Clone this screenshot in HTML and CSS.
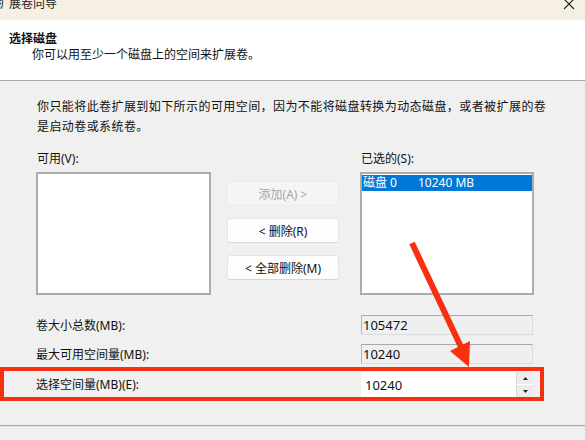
FILE: index.html
```html
<!DOCTYPE html>
<html lang="zh-CN">
<head>
  <meta charset="UTF-8" />
  <meta name="viewport" content="width=device-width, initial-scale=1" />
  <title>扩展卷向导</title>
  <link rel="stylesheet" href="styles.css">
</head>
<body>
  <div class="titlebar">
    <span class="title">扩展卷向导</span>
    <svg class="close" width="12" height="12" viewBox="0 0 12 12">
      <path d="M1 1 L11 11 M11 1 L1 11" stroke="#222" stroke-width="1.1" fill="none" />
    </svg>
  </div>

  <div class="header">
    <h1>选择磁盘</h1>
    <p>你可以用至少一个磁盘上的空间来扩展卷。</p>
  </div>

  <div class="content">
    <p class="note">你只能将此卷扩展到如下所示的可用空间，因为不能将磁盘转换为动态磁盘，或者被扩展的卷是启动卷或系统卷。</p>

    <div class="lists">
      <div class="list-col left">
        <label>可用(V):</label>
        <div class="listbox"></div>
      </div>
      <div class="actions">
        <button class="btn" disabled>添加(A) &gt;</button>
        <button class="btn">&lt; 删除(R)</button>
        <button class="btn">&lt; 全部删除(M)</button>
      </div>
      <div class="list-col right">
        <label>已选的(S):</label>
        <div class="listbox">
          <div class="item selected"><span class="disk">磁盘 0</span><span>10240 MB</span></div>
        </div>
      </div>
    </div>

    <div class="fields">
      <div class="field-row">
        <label>卷大小总数(MB):</label>
        <div class="readonly">105472</div>
      </div>
      <div class="field-row">
        <label>最大可用空间量(MB):</label>
        <div class="readonly">10240</div>
      </div>
      <div class="field-row marked">
        <label>选择空间量(MB)(E):</label>
        <div class="spin">
          <input type="text" value="10240" />
          <div class="spin-buttons">
            <span class="spin-btn"><svg width="5" height="3" viewBox="0 0 5 3"><polygon points="2.5,0 5,3 0,3" fill="#222" /></svg></span>
            <span class="spin-btn"><svg width="5" height="3" viewBox="0 0 5 3"><polygon points="0,0 5,0 2.5,3" fill="#222" /></svg></span>
          </div>
        </div>
      </div>
    </div>

    <div class="divider"></div>
  </div>

  <!-- callout arrow pointing at the size field -->
  <svg class="callout" width="585" height="440" viewBox="0 0 585 440">
    <line x1="412" y1="243" x2="461" y2="347" stroke="#f7300f" stroke-width="6" />
    <polygon points="469,367 450,351 470,341" fill="#f7300f" />
  </svg>
</body>
</html>
```

FILE: styles.css
```css
body {
  margin: 0;
  width: 585px;
  height: 440px;
  overflow: hidden;
  position: relative;
  background: #f0f0f0;
  color: #111;
  font-family: "Noto Sans", "Noto Sans CJK SC", sans-serif;
  font-size: 12px;
}
.titlebar {
  height: 20px;
  background: #f6f0e4;
  display: flex;
  justify-content: space-between;
  align-items: flex-start;
  overflow: hidden;
}
.title {
  margin: -2px 0 0 -3px;
  line-height: 12px;
  font-size: 12px;
  color: #222;
}
.close {
  margin: -2px 10px 0 0;
}
.header {
  background: #fff;
  height: 61px;
  box-sizing: border-box;
  padding-top: 11px;
  border-bottom: 1px solid #a8a8a8;
}
.header h1 {
  margin: 0 0 0 9px;
  font-size: 12px;
  line-height: 16px;
  font-weight: bold;
}
.header p {
  margin: 0 0 0 32px;
  line-height: 16px;
}
.content {
  padding-top: 16px;
}
.note {
  margin: 0 0 0 37px;
  width: 515px;
  line-height: 20px;
  letter-spacing: 0.42px;
}
.lists {
  display: flex;
  margin-top: 14px;
  padding-left: 36px;
}
.list-col label {
  display: block;
  line-height: 16px;
  margin-bottom: 5px;
  padding-left: 1px;
}
.left .listbox {
  width: 175px;
}
.right {
  margin-left: 21px;
}
.right .listbox {
  width: 174px;
}
.listbox {
  height: 123px;
  box-sizing: border-box;
  border: 2px solid #acacac;
  background: #fff;
  padding: 1px 0;
}
.item {
  height: 16px;
  line-height: 16px;
  padding-left: 1px;
  display: flex;
}
.item.selected {
  background: #0078d7;
  color: #fff;
}
.disk {
  width: 55px;
}
.actions {
  margin-left: 16px;
  padding-top: 30px;
  display: flex;
  flex-direction: column;
  gap: 12px;
}
.btn {
  width: 112px;
  height: 25px;
  font-family: inherit;
  font-size: 12px;
  color: #111;
  background: #fdfdfd;
  border: 1px solid #e4e4e4;
  border-bottom-color: #d6d6d6;
  border-radius: 3px;
  padding: 0;
}
.btn:disabled {
  background: #f5f5f5;
  color: #a6a6a6;
  border-color: #ececec;
}
.fields {
  margin-top: 20px;
}
.field-row {
  display: flex;
  align-items: center;
  padding-left: 36px;
  height: 20px;
}
.field-row + .field-row {
  margin-top: 9px;
}
.field-row label {
  width: 325px;
}
.readonly {
  width: 172px;
  height: 20px;
  box-sizing: border-box;
  border: 1px solid #dcdcdc;
  border-top-color: #a9a9a9;
  border-left-color: #b4b4b4;
  background: #efefef;
  padding-left: 1px;
  font-size: 13px;
  line-height: 18px;
}
.field-row.marked {
  margin-top: 3px;
  width: 544px;
  height: 34px;
  box-sizing: border-box;
  border: 4px solid #f7300f;
  padding-left: 32px;
}
.spin {
  width: 172px;
  height: 25px;
  display: flex;
  background: #fff;
  margin-top: 1px;
}
.spin input {
  flex: 1;
  width: 0;
  border: none;
  outline: none;
  background: #fff;
  font-family: inherit;
  font-size: 13px;
  padding: 0 0 0 4px;
  color: #111;
}
.spin-buttons {
  width: 17px;
  display: flex;
  flex-direction: column;
  gap: 1px;
  background: #fff;
}
.spin-btn {
  flex: 1;
  display: flex;
  align-items: center;
  justify-content: center;
  background: #ececec;
  border-left: 1px solid #d8d8d8;
}
.divider {
  margin-top: 24px;
  border-top: 1px solid #a9a9a9;
  border-bottom: 1px solid #e2e2e2;
}
.callout {
  position: absolute;
  top: 0;
  left: 0;
  pointer-events: none;
}
```
